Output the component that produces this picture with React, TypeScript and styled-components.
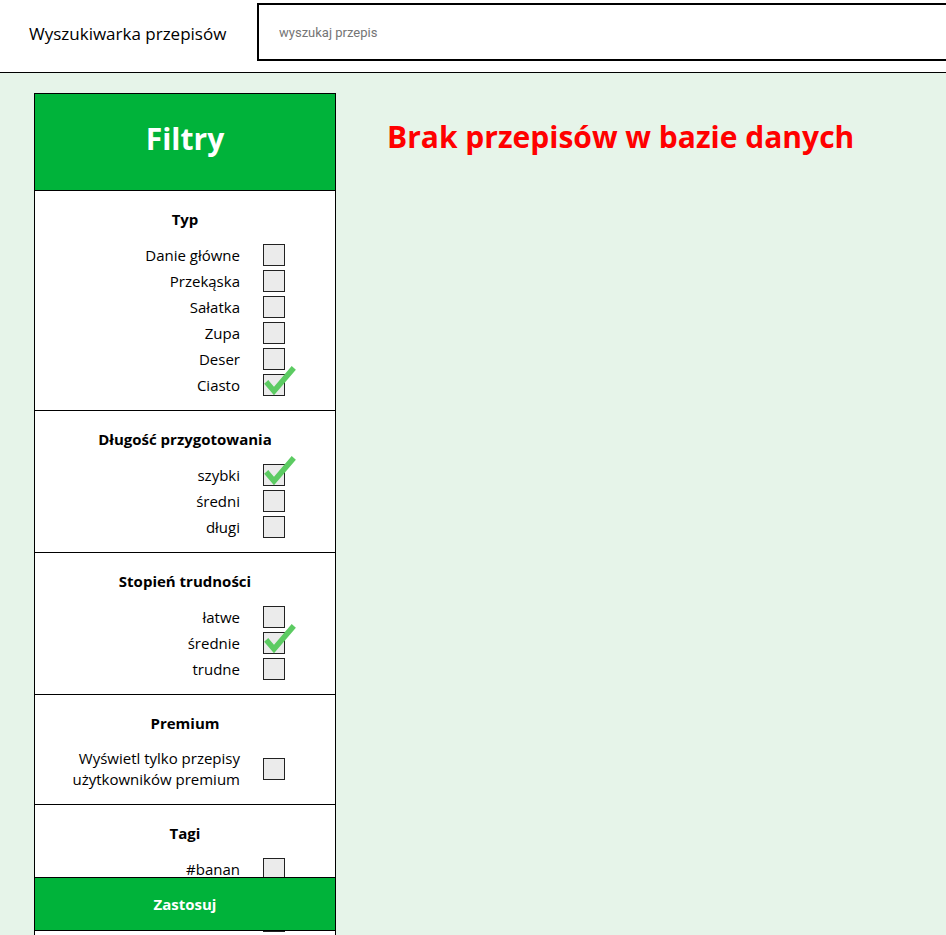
import React from 'react';
import styled, { createGlobalStyle } from 'styled-components';

type Option = { label: string; checked?: boolean };
type Section = { title: string; options: Option[] };

const sections: Section[] = [
  {
    title: 'Typ',
    options: [
      { label: 'Danie główne' },
      { label: 'Przekąska' },
      { label: 'Sałatka' },
      { label: 'Zupa' },
      { label: 'Deser' },
      { label: 'Ciasto', checked: true },
    ],
  },
  {
    title: 'Długość przygotowania',
    options: [{ label: 'szybki', checked: true }, { label: 'średni' }, { label: 'długi' }],
  },
  {
    title: 'Stopień trudności',
    options: [{ label: 'łatwe' }, { label: 'średnie', checked: true }, { label: 'trudne' }],
  },
  {
    title: 'Premium',
    options: [{ label: 'Wyświetl tylko przepisy użytkowników premium' }],
  },
  {
    title: 'Tagi',
    options: [{ label: '#banan' }, { label: '#czekolada' }, { label: '#kurczak' }],
  },
];

const GlobalStyle = createGlobalStyle`
  html, body {
    margin: 0;
    padding: 0;
    height: 935px;
    overflow: hidden;
    background: #e6f4e9;
    font-family: "Open Sans", "Noto Sans", sans-serif;
    color: #000;
  }
`;

const Header = styled.header`
  display: flex;
  align-items: flex-start;
  height: 72px;
  background: #ffffff;
  border-bottom: 1px solid #000;
`;

const Title = styled.div`
  width: 257px;
  padding: 22px 0 0 29px;
  box-sizing: border-box;
  font-size: 17px;
  white-space: nowrap;
`;

const Search = styled.input`
  flex: 1;
  margin-top: 3px;
  margin-right: -4px;
  height: 58px;
  box-sizing: border-box;
  border: 2px solid #000;
  padding: 0 0 0 20px;
  font-family: Roboto, "Liberation Sans", sans-serif;
  font-size: 13px;
  outline: none;

  &::placeholder {
    color: #757575;
  }
`;

const Content = styled.main`
  display: flex;
  align-items: flex-start;
  padding: 20px 0 0 34px;
`;

const Sidebar = styled.aside`
  position: relative;
  width: 302px;
  height: 843px;
  overflow: hidden;
  box-sizing: border-box;
  border: 1px solid #000;
  border-bottom: none;
  background: #ffffff;
`;

const SidebarHeader = styled.div`
  height: 97px;
  box-sizing: border-box;
  padding-bottom: 7px;
  display: flex;
  align-items: center;
  justify-content: center;
  background: #00b33a;
  border-bottom: 1px solid #000;
  color: #fff;
  font-size: 30px;
  font-weight: 700;
`;

const Group = styled.section<{ $last?: boolean }>`
  padding: 18px 0 12px;
  border-bottom: ${p => (p.$last ? 'none' : '1px solid #000')};
`;

const GroupTitle = styled.h3`
  margin: 0 0 13px;
  text-align: center;
  font-size: 15px;
  line-height: 20px;
  font-weight: 700;
`;

const Row = styled.label<{ $multi?: boolean }>`
  display: grid;
  grid-template-columns: 205px 22px;
  column-gap: 23px;
  align-items: center;
  min-height: 26px;
  padding: ${p => (p.$multi ? '2px 0' : '0')};
`;

const Label = styled.span`
  text-align: right;
  font-size: 15px;
  line-height: 21px;
`;

const Box = styled.span`
  position: relative;
  width: 22px;
  height: 22px;
  box-sizing: border-box;
  border: 1px solid #222;
  background: #ebebeb;
`;

const Check = styled.svg`
  position: absolute;
  left: 1px;
  top: -9px;
  width: 30px;
  height: 30px;
  overflow: visible;
`;

const Apply = styled.button`
  position: absolute;
  left: 0;
  right: 0;
  bottom: 5px;
  height: 54px;
  border: none;
  border-top: 1px solid #000;
  border-bottom: 1px solid #000;
  background: #00b33a;
  color: #fff;
  font-family: "Open Sans", "Noto Sans", sans-serif;
  font-size: 15px;
  font-weight: 700;
  cursor: pointer;
`;

const Empty = styled.h1`
  margin: 23px 0 0 51px;
  color: #ff0000;
  font-size: 30px;
  font-weight: 700;
  white-space: nowrap;
`;

const CheckMark = () => (
  <Check viewBox="0 0 30 30">
    <polyline
      points="3,18 9,25 27,4"
      fill="none"
      stroke="#5ccb62"
      strokeWidth="5.5"
      strokeLinecap="square"
      strokeLinejoin="miter"
    />
  </Check>
);

const App = () => (
  <>
    <GlobalStyle />
    <Header>
      <Title>Wyszukiwarka przepisów</Title>
      <Search placeholder="wyszukaj przepis" />
    </Header>
    <Content>
      <Sidebar>
        <SidebarHeader>Filtry</SidebarHeader>
        {sections.map((section, i) => (
          <Group key={section.title} $last={i === sections.length - 1}>
            <GroupTitle>{section.title}</GroupTitle>
            {section.options.map(option => (
              <Row key={option.label} $multi={option.label.length > 30}>
                <Label>{option.label}</Label>
                <Box>{option.checked && <CheckMark />}</Box>
              </Row>
            ))}
          </Group>
        ))}
        <Apply type="button">Zastosuj</Apply>
      </Sidebar>
      <Empty>Brak przepisów w bazie danych</Empty>
    </Content>
  </>
);

export default App;
